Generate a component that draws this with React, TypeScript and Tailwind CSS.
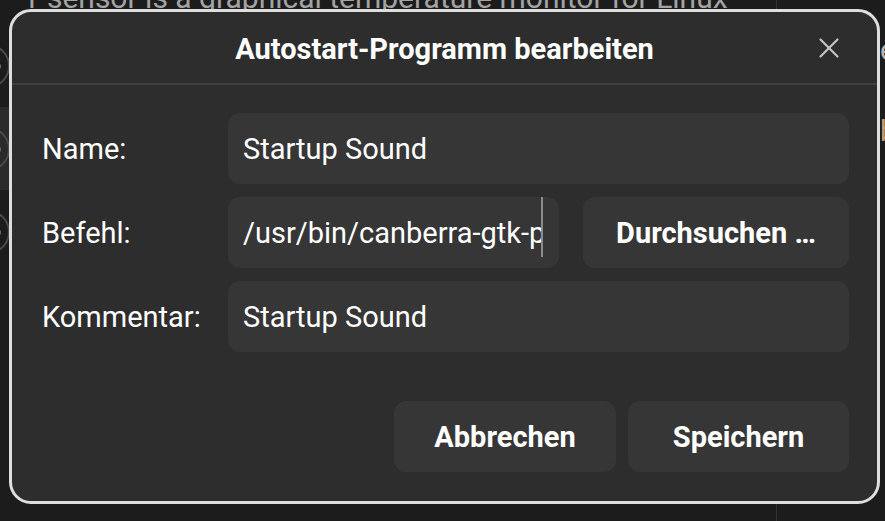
import { X } from "lucide-react";

function BackdropRow({ light }: { light?: boolean }) {
  return (
    <div className={`flex h-[83px] items-center ${light ? "bg-[#2a2a2a]" : ""}`}>
      <div className="relative -ml-[34px] h-[44px] w-[44px] shrink-0 rounded-full border-2 border-[#4a4a4a]">
        <div className="absolute right-[7px] top-[17px] h-[7px] w-[7px] rounded-full bg-[#6a6a6a]" />
      </div>
    </div>
  );
}

function Backdrop() {
  return (
    <div className="flex h-full">
      <div className="flex w-[12px] flex-col overflow-hidden pt-[24px]">
        <BackdropRow />
        <BackdropRow light />
        <BackdropRow />
      </div>
      <div className="flex-1 overflow-hidden border-r border-[#343434] pl-[16px]">
        <p className="-mt-[17px] whitespace-nowrap text-[30px] leading-none text-[#a3a3a3]">
          Psensor is a graphical temperature monitor for Linux
        </p>
      </div>
      <div className="flex w-[108px] flex-col overflow-hidden pl-[103px] pt-[36px] text-[29px] leading-none">
        <span className="text-[#b5b5b5]">e</span>
        <span className="mt-[52px] text-[#c8a070]">b</span>
      </div>
    </div>
  );
}

function Entry({ value, cursor }: { value: string; cursor?: boolean }) {
  return (
    <div className="flex h-[71px] min-w-0 flex-1 items-center rounded-[12px] bg-[#363636] pl-[15px] pr-[16px]">
      <span className="min-w-0 flex-1 overflow-hidden whitespace-nowrap pt-[2px] text-[29px] text-white">{value}</span>
      {cursor && <div className="h-[60px] w-[2px] shrink-0 self-start bg-[#8c8c8c]" />}
    </div>
  );
}

function Button({ label, className = "" }: { label: string; className?: string }) {
  return (
    <button
      className={`flex h-[71px] items-center justify-center rounded-[12px] bg-[#363636] pt-[2px] text-[29px] font-bold text-white ${className}`}
    >
      {label}
    </button>
  );
}

export default function App() {
  return (
    <div className="relative h-[521px] w-[885px] overflow-hidden bg-[#1c1c1c] font-['Roboto',sans-serif]">
      <Backdrop />

      <div className="absolute left-[9px] top-[9px] flex h-[495px] w-[871px] flex-col overflow-hidden rounded-[22px] border-[3px] border-[#dedede] bg-[#2d2d2d]">
        <div className="relative flex h-[71px] shrink-0 items-center justify-center pt-[4px]">
          <h1 className="text-[29px] font-bold text-white">Autostart-Programm bearbeiten</h1>
          <button className="absolute right-[31px] top-[19px] text-[#c4c4c4]">
            <X size={34} strokeWidth={1.5} />
          </button>
        </div>
        <div className="h-[2px] shrink-0 bg-[#3e3e3e]" />

        <div className="flex flex-1 flex-col pb-[29px] pl-[30px] pr-[28px] pt-[28px]">
          <div className="grid grid-cols-[186px_minmax(0,1fr)] gap-y-[13px] text-[29px] text-white">
            <div className="flex h-[71px] items-center pt-[2px]">Name:</div>
            <Entry value="Startup Sound" />

            <div className="flex h-[71px] items-center pt-[2px]">Befehl:</div>
            <div className="flex min-w-0 gap-[24px]">
              <Entry value='/usr/bin/canberra-gtk-play --id="desktop-login" --description="GNOME Login"' cursor />
              <Button label="Durchsuchen …" className="w-[266px] shrink-0" />
            </div>

            <div className="flex h-[71px] items-center pt-[2px]">Kommentar:</div>
            <Entry value="Startup Sound" />
          </div>

          <div className="mt-auto flex justify-end gap-[12px]">
            <Button label="Abbrechen" className="w-[222px]" />
            <Button label="Speichern" className="w-[221px]" />
          </div>
        </div>
      </div>
    </div>
  );
}
